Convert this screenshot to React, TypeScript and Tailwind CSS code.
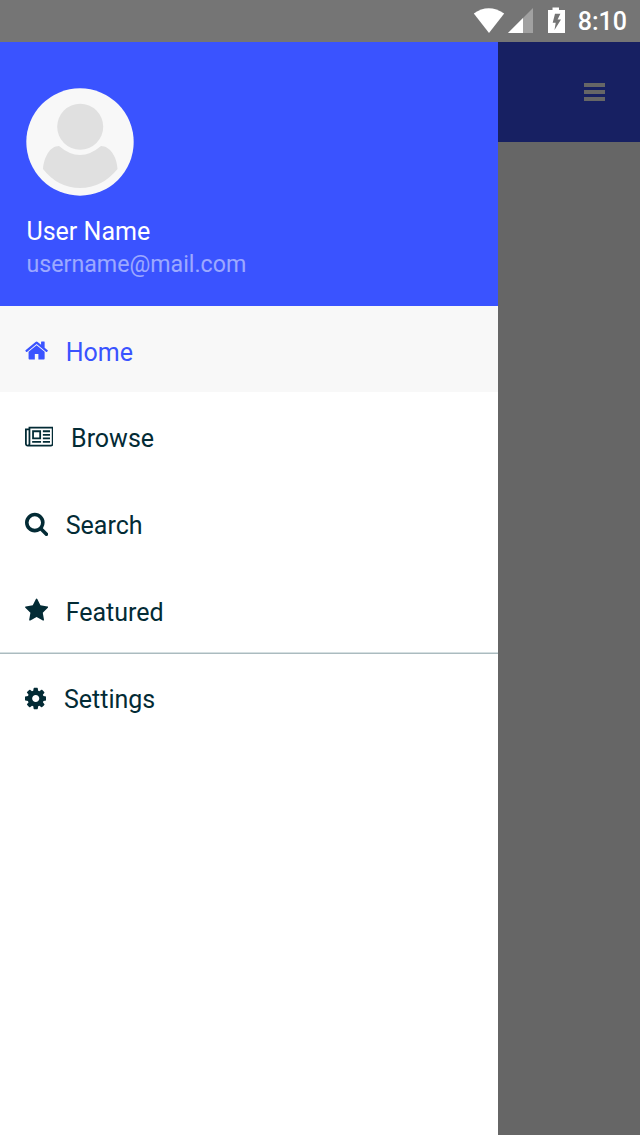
const HOME = "M1472 992v480q0 26-19 45t-45 19h-384v-384h-256v384h-384q-26 0-45-19t-19-45v-480q0-1 .5-3t.5-3l575-474 575 474q1 2 1 6zm223-69l-62 74q-8 9-21 11h-3q-13 0-21-7l-692-577-692 577q-12 8-24 7-13-2-21-11l-62-74q-8-10-7-23.5t11-21.5l719-599q32-26 76-26t76 26l244 204v-195q0-14 9-23t23-9h192q14 0 23 9t9 23v408l219 182q10 8 11 21.5t-7 23.5z";
const NEWS = "M1024 512h-384v384h384v-384zm128 640v128h-640v-128h640zm0-768v640h-640v-640h640zm640 768v128h-512v-128h512zm0-256v128h-512v-128h512zm0-256v128h-512v-128h512zm0-256v128h-512v-128h512zm-1536 960v-960h-128v960q0 26 19 45t45 19 45-19 19-45zm1664 0v-1088h-1536v1088q0 33-11 64h1483q26 0 45-19t19-45zm128-1216v1216q0 80-56 136t-136 56h-1664q-80 0-136-56t-56-136v-1088h256v-128h1792z";
const SEARCH = "M1216 832q0-185-131.5-316.5t-316.5-131.5-316.5 131.5-131.5 316.5 131.5 316.5 316.5 131.5 316.5-131.5 131.5-316.5zm512 832q0 52-38 90t-90 38q-54 0-90-38l-343-342q-179 124-399 124-143 0-273.5-55.5t-225-150-150-225-55.5-273.5 55.5-273.5 150-225 225-150 273.5-55.5 273.5 55.5 225 150 150 225 55.5 273.5q0 220-124 399l343 343q37 37 37 90z";
const STAR = "M1728 647q0 22-26 48l-363 354 86 500q1 7 1 20 0 21-10.5 35.5t-30.5 14.5q-19 0-40-12l-449-236-449 236q-22 12-40 12-21 0-31.5-14.5t-10.5-35.5q0-6 2-20l86-500-364-354q-25-27-25-48 0-37 56-46l502-73 225-455q19-41 49-41t49 41l225 455 502 73q56 9 56 46z";
const COG = "M1152 896q0-106-75-181t-181-75-181 75-75 181 75 181 181 75 181-75 75-181zm512-109v222q0 12-8 23t-20 13l-185 28q-19 54-39 91 35 50 107 138 10 12 10 25t-9 23q-27 37-99 108t-94 71q-12 0-26-9l-138-108q-44 23-91 38-16 136-29 186-7 28-36 28h-222q-14 0-24.5-8.5t-11.5-21.5l-28-184q-49-16-90-37l-141 107q-10 9-25 9-14 0-25-11-126-114-165-168-7-10-7-23 0-12 8-23 15-21 51-66.5t54-70.5q-27-50-41-99l-183-27q-13-2-21-12.5t-8-23.5v-222q0-12 8-23t19-13l186-28q14-46 39-92-40-57-107-138-10-12-10-24 0-10 9-23 26-36 98.5-107.5t94.5-71.5q13 0 26 10l138 107q44-23 91-38 16-136 29-186 7-28 36-28h222q14 0 24.5 8.5t11.5 21.5l28 184q49 16 90 37l142-107q9-9 24-9 13 0 25 10 129 119 165 170 7 8 7 22 0 12-8 23-15 21-51 66.5t-54 70.5q26 50 41 98l183 28q13 2 21 12.5t8 23.5z";

const items = [
  { label: "Home", d: HOME, x: 64, w: 1664, row: "h-[86px] bg-[#f8f8f8] text-[#3a53ff] pt-8", text: "mt-px" },
  { label: "Browse", d: NEWS, x: 0, w: 2048, row: "h-[87px] pt-[33px]", text: "" },
  { label: "Search", d: SEARCH, x: 64, w: 1664, row: "h-[87px] pt-8", text: "mt-px" },
  { label: "Featured", d: STAR, x: 64, w: 1664, row: "h-[86px] pt-8", text: "mt-px" },
  { label: "Settings", d: COG, x: 128, w: 1536, row: "h-[88px] border-t border-[#d5dfe1]", text: "" },
];

function StatusBar() {
  return (
    <header className="flex h-[42px] shrink-0 items-start justify-end bg-[#757575] pr-[13px] text-white">
      <svg className="h-[42px] w-[94px]" viewBox="0 0 94 42" fill="currentColor">
        <path d="M.8 13.5Q15.5 2.800 31.200 13.500L16 33Z" />
        <path d="M60 8V33H35Z" opacity=".32" />
        <path d="M50 18V33H35Z" />
        <path fillRule="evenodd" d="M79.500 7.500h6.500v2.500h6v23H75V10h4.500zM82 13.800l-2.300 9h3l-1.200 7.200 6.500-10.500h-3.400l2.800-5.700z" />
      </svg>
      <time className="ml-[11px] mt-[7px] text-[25px] font-medium leading-[29px]">8:10</time>
    </header>
  );
}

export default function App() {
  return (
    <div className="flex h-[1135px] w-[640px] flex-col overflow-hidden bg-[#666] font-['Roboto',sans-serif]">
      <StatusBar />
      <main className="flex min-h-0 flex-1">
        <aside className="flex w-[498px] flex-col bg-white text-[#032b35]">
          <section className="h-[264px] bg-[#3a53ff] pl-[26px] pt-[46px] text-white">
            <svg className="size-[108px]" viewBox="0 0 108 108">
              <circle cx="54" cy="54" r="53.700" fill="#f8f8f8" />
              <circle cx="54.200" cy="38.700" r="23" fill="#e0e0e0" />
              <path d="M33 58Q54 76 75 58C84 58 91 69 91.500 81Q76 100 54 100Q32 100 17 81C18 69 24 58 33 58Z" fill="#e0e0e0" />
            </svg>
            <p className="mt-5 pl-[.5px] text-[25px] leading-[32px]">User Name</p>
            <p className="pl-[.5px] text-[23.200px] leading-[32px] text-white/50">username@mail.com</p>
          </section>
          <nav>
            {items.map((item) => (
              <a key={item.label} className={`block ${item.row}`}>
                {item.label === "Settings" && <span className="mb-8 block h-px bg-[#abbbbf]" />}
                <span className="flex items-start pl-[24.500px]">
                  <svg height="25" width={(item.w * 25) / 1792} viewBox={`${item.x} 0 ${item.w} 1792`} fill="currentColor">
                    <path d={item.d} />
                  </svg>
                  <span className={`ml-[18px] text-[25px] leading-[28px] ${item.text}`}>{item.label}</span>
                </span>
              </a>
            ))}
          </nav>
        </aside>
        <div className="flex h-[100px] flex-1 justify-end bg-[#172062] pr-[35px] pt-[41px]">
          <button aria-label="Menu" className="flex h-[18px] w-[21px] flex-col justify-between">
            <span className="h-[4px] w-full bg-[#666]" />
            <span className="h-[4px] w-full bg-[#666]" />
            <span className="h-[4px] w-full bg-[#666]" />
          </button>
        </div>
      </main>
    </div>
  );
}
